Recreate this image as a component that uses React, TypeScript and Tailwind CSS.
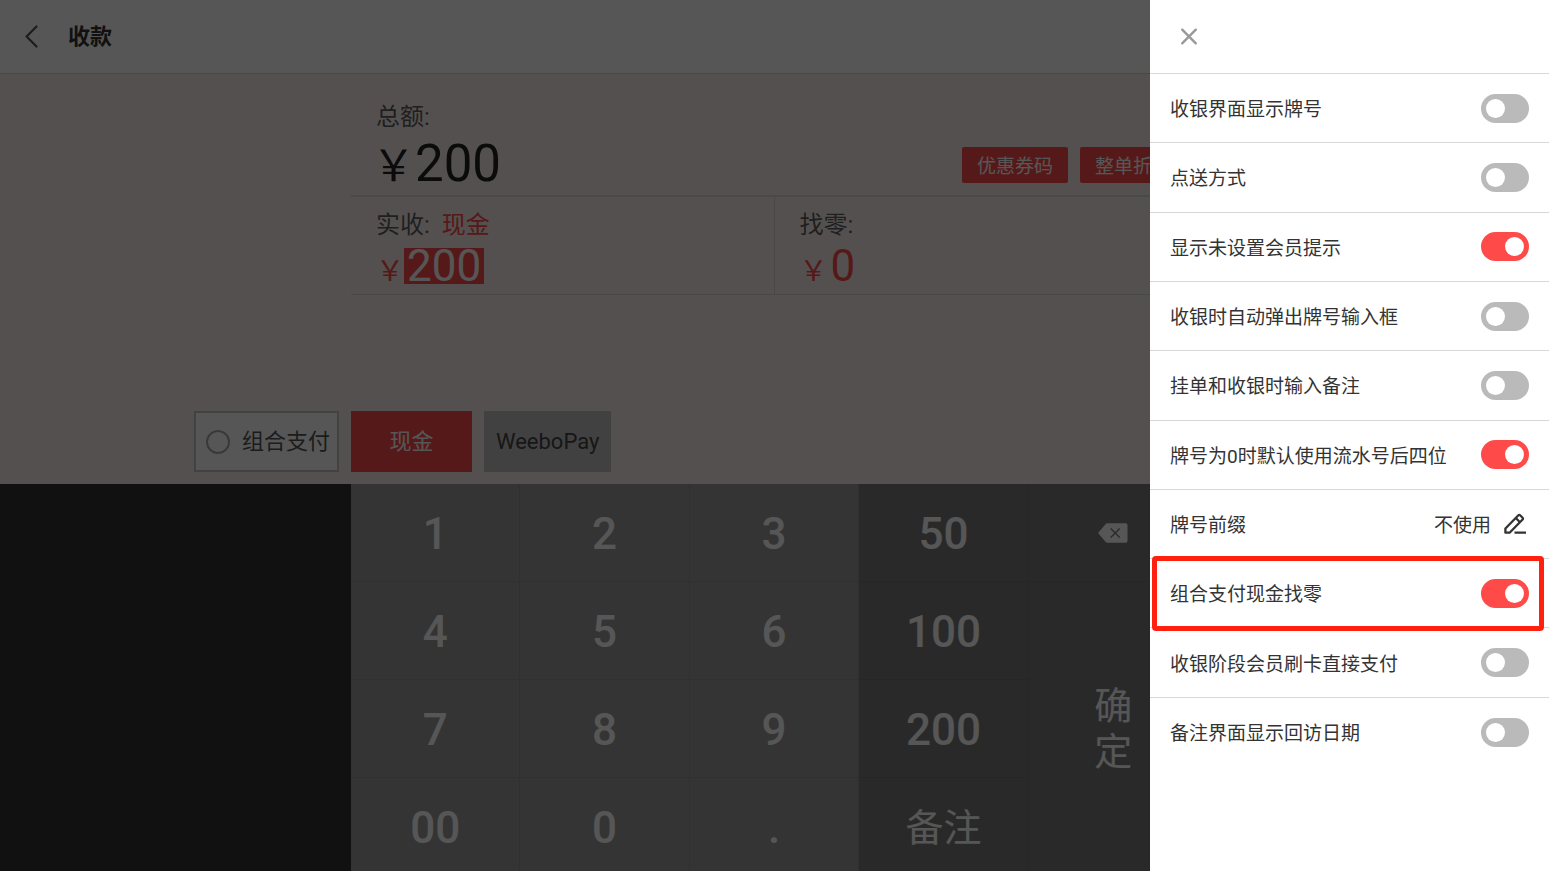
import { useState } from "react";

const INITIAL_SETTINGS = [
  { id: "show-tag", label: "收银界面显示牌号", on: false },
  { id: "serve-mode", label: "点送方式", on: false },
  { id: "member-tip", label: "显示未设置会员提示", on: true },
  { id: "auto-tag", label: "收银时自动弹出牌号输入框", on: false },
  { id: "remark-input", label: "挂单和收银时输入备注", on: false },
  { id: "serial-tail", label: "牌号为0时默认使用流水号后四位", on: true },
  { id: "tag-prefix", label: "牌号前缀", value: "不使用" },
  { id: "combo-change", label: "组合支付现金找零", on: true, highlighted: true },
  { id: "member-swipe", label: "收银阶段会员刷卡直接支付", on: false },
  { id: "visit-date", label: "备注界面显示回访日期", on: false },
];

const KEY_ROWS = [
  ["1", "2", "3", "50"],
  ["4", "5", "6", "100"],
  ["7", "8", "9", "200"],
  ["00", "0", ".", "备注"],
];

function BackIcon() {
  return (
    <svg className="h-6 w-4" viewBox="0 0 16 24" fill="none" stroke="currentColor" strokeWidth="2.2" strokeLinecap="round" strokeLinejoin="round" aria-hidden="true">
      <path d="M12.500 1.500 2.600 11.500l9.900 10" />
    </svg>
  );
}

function CloseIcon() {
  return (
    <svg className="size-[18px]" viewBox="0 0 18 18" fill="none" stroke="currentColor" strokeWidth="2.4" strokeLinecap="round" aria-hidden="true">
      <path d="M2.200 1.700l13.600 13.600M15.800 1.700 2.200 15.300" />
    </svg>
  );
}

function PencilIcon() {
  return (
    <svg className="size-[26px]" viewBox="0 0 26 26" fill="none" stroke="currentColor" strokeWidth="2.300" strokeLinejoin="round" aria-hidden="true">
      <path d="M2.400 21.700v-4.200L15.400 4.300a1.200 1.200 0 0 1 1.700 0l2.500 2.500a1.200 1.200 0 0 1 0 1.700L6.600 21.700z" />
      <path d="M12.800 7l4.200 4.200M11.500 21.700H23" />
    </svg>
  );
}

function BackspaceIcon() {
  return (
    <svg className="h-5 w-[30px]" viewBox="0 0 30 20" aria-hidden="true">
      <path className="fill-white" d="M9.2.3h18.3a2 2 0 0 1 2 2v15.4a2 2 0 0 1-2 2H9.2a2 2 0 0 1-1.5-.7L.9 11.100a1.600 1.600 0 0 1 0-2.200L7.700 1a2 2 0 0 1 1.500-.7z" />
      <path className="stroke-[#7b7b7b]" d="M12.700 5.500l9 9M21.700 5.500l-9 9" strokeWidth="1.300" fill="none" />
    </svg>
  );
}

function Header() {
  return (
    <header className="flex h-[74px] shrink-0 items-center gap-7 border-b border-[#d6d6d6] bg-white pl-6">
      <button type="button" aria-label="返回" className="text-[#555]">
        <BackIcon />
      </button>
      <h1 className="text-[22px] font-bold text-[#333]">收款</h1>
    </header>
  );
}

function Summary() {
  return (
    <section>
      <div className="flex items-end justify-between border-b-2 border-[#d9d9d9] pt-[27px] pr-3 pl-[25px]">
        <div className="pb-[3px]">
          <p className="text-2xl/8 text-[#5e5e5e]">总额:</p>
          <p className="mt-[3px] flex h-14 items-baseline text-[51px]/[56px] text-[#222]">
            <span className="-ml-1 text-[43px]">￥</span>200
          </p>
        </div>
        <div className="mb-3 flex gap-3 text-[19px]/6 text-white">
          <button type="button" className="h-9 rounded-xs bg-[#ff4a4a] px-[15px] pt-[3px]">优惠券码</button>
          <button type="button" className="h-9 rounded-xs bg-[#ff4a4a] px-[15px] pt-[3px]">整单折扣</button>
        </div>
      </div>
      <div className="grid grid-cols-2 border-b border-[#d6d6d6]">
        <div className="border-r border-[#d6d6d6] pt-3 pb-[10px] pl-[25px]">
          <p className="flex h-8 gap-3 text-2xl/8 text-[#5e5e5e]">
            实收:<span className="text-[#ff4a4a]">现金</span>
          </p>
          <p className="mt-[7px] flex h-9 items-baseline text-[44px]/9 text-[#ff4a4a]">
            <span className="text-[28px]">￥</span>
            <span className="bg-[#ff4a4a] px-[3px] text-white">200</span>
          </p>
        </div>
        <div className="pt-3 pb-[10px] pl-[25px]">
          <p className="h-8 text-2xl/8 text-[#5e5e5e]">找零:</p>
          <p className="mt-[7px] flex h-9 items-baseline text-[44px]/9 text-[#ff4a4a]">
            <span className="text-[28px]">￥</span>
            <span className="px-[3px]">0</span>
          </p>
        </div>
      </div>
    </section>
  );
}

function PaymentMethods() {
  return (
    <div className="mt-[116px] grid grid-cols-[351px_minmax(0,1fr)] pb-3 text-[22px]">
      <div className="flex justify-end pr-3">
        <label className="flex h-[61px] items-center gap-3 border-2 border-[#c4c4c4] bg-white pr-[7px] pl-[10px] text-[#555]">
          <input type="radio" name="method" className="size-6 appearance-none rounded-full border-2 border-[#aaa]" />
          组合支付
        </label>
      </div>
      <div className="flex gap-3">
        <button type="button" className="h-[61px] w-[121px] bg-[#ff4a4a] text-white">现金</button>
        <button type="button" className="h-[61px] bg-[#c0c0c0] px-3 text-[#444]">WeeboPay</button>
      </div>
    </div>
  );
}

function Keypad() {
  return (
    <div className="grid flex-1 shrink-0 grid-cols-[351px_minmax(0,1fr)_351px] bg-[#333]">
      <div className="col-start-2 grid grid-cols-5 text-white">
        <div className="col-span-4 grid grid-cols-4">
          {KEY_ROWS.flat().map((key, i) => (
            <button
              key={key}
              type="button"
              className={
                i % 4 !== 3
                  ? "h-[98px] border-r border-b border-[#8f8f8f] bg-[#9b9b9b] pt-[3px] text-[44px] font-medium"
                  : key === "备注"
                    ? "h-[98px] border-r border-b border-[#727272] bg-[#7b7b7b] pt-[3px] text-[38px]"
                    : "h-[98px] border-r border-b border-[#727272] bg-[#7b7b7b] pt-[3px] text-[44px] font-medium"
              }
            >
              {key}
            </button>
          ))}
        </div>
        <div className="flex flex-col bg-[#7b7b7b]">
          <button type="button" aria-label="退格" className="flex h-[98px] items-center justify-center border-b border-[#727272]">
            <BackspaceIcon />
          </button>
          <button type="button" className="flex flex-1 flex-col items-center justify-center text-[38px]/[46px]">
            <span>确</span>
            <span>定</span>
          </button>
        </div>
      </div>
    </div>
  );
}

function SettingsDrawer() {
  const [settings, setSettings] = useState(INITIAL_SETTINGS);
  const toggle = (id: string) =>
    setSettings((list) => list.map((s) => (s.id === id ? { ...s, on: !s.on } : s)));

  return (
    <aside role="dialog" aria-label="设置" className="h-full w-[399px] bg-white text-[#333]">
      <div className="flex h-[74px] items-center border-b border-[#d8d8d8] pl-[30px]">
        <button type="button" aria-label="关闭" className="text-[#999]">
          <CloseIcon />
        </button>
      </div>
      <ul className="grid min-h-[693px] auto-rows-fr text-[19px]/6">
        {settings.map((s, i) => (
          <li
            key={s.id}
            className={
              i < settings.length - 1
                ? "relative flex items-center justify-between border-b border-[#d8d8d8] px-5"
                : "relative flex items-center justify-between px-5"
            }
          >
            {s.value ? (
              <>
                <span className="pt-1">{s.label}</span>
                <button type="button" className="flex items-center gap-3">
                  <span className="pt-1">{s.value}</span>
                  <PencilIcon />
                </button>
              </>
            ) : (
              <>
                <label htmlFor={s.id} className="pt-1">{s.label}</label>
                <input
                  id={s.id}
                  type="checkbox"
                  role="switch"
                  checked={s.on}
                  onChange={() => toggle(s.id)}
                  className="flex h-[29px] w-12 appearance-none items-center rounded-full bg-[#bababa] px-[5px] before:size-[19px] before:rounded-full before:bg-white checked:justify-end checked:bg-[#ff4a4a]"
                />
              </>
            )}
            {s.highlighted && (
              <span className="pointer-events-none absolute -top-[3px] right-[5px] -bottom-1 left-0.5 rounded border-[5px] border-[#ff2010]" />
            )}
          </li>
        ))}
      </ul>
    </aside>
  );
}

export default function App() {
  return (
    <div className="relative h-screen overflow-hidden font-['Roboto','Noto_Sans_CJK_SC',sans-serif]">
      <main className="flex h-full flex-col bg-[#f9eeee]">
        <Header />
        <div className="grid shrink-0 grid-cols-[351px_minmax(0,1fr)_351px]">
          <div className="col-start-2">
            <Summary />
          </div>
        </div>
        <PaymentMethods />
        <Keypad />
      </main>
      <div className="absolute inset-0 flex justify-end bg-[#000000a9]">
        <SettingsDrawer />
      </div>
    </div>
  );
}
